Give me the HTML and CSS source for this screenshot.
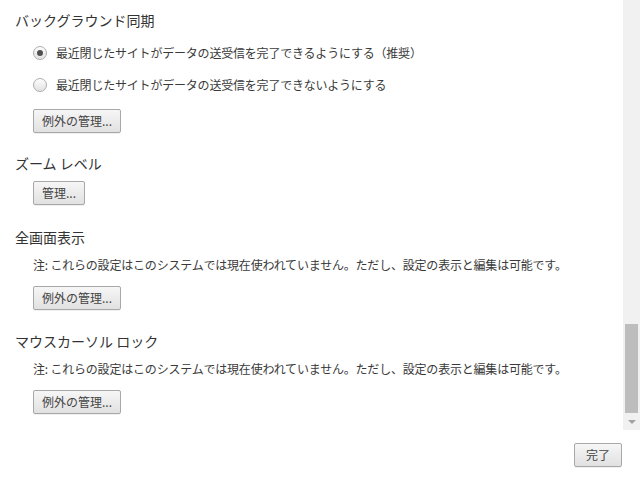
FILE: index.html
```html
<!DOCTYPE html>
<html lang="ja">
<head>
<meta charset="utf-8">
<link rel="stylesheet" href="styles.css">
</head>
<body>
<div class="main">
  <div class="content">
    <section class="section first">
      <h3 class="heading">バックグラウンド同期</h3>
      <div class="radios">
        <label class="radio-row"><span class="radio checked"></span><span>最近閉じたサイトがデータの送受信を完了できるようにする（推奨）</span></label>
        <label class="radio-row"><span class="radio"></span><span>最近閉じたサイトがデータの送受信を完了できないようにする</span></label>
      </div>
      <button class="btn btn-r">例外の管理...</button>
    </section>
    <section class="section s2">
      <h3 class="heading">ズーム レベル</h3>
      <button class="btn btn-h">管理...</button>
    </section>
    <section class="section s3">
      <h3 class="heading">全画面表示</h3>
      <p class="note">注: これらの設定はこのシステムでは現在使われていません。ただし、設定の表示と編集は可能です。</p>
      <button class="btn btn-n">例外の管理...</button>
    </section>
    <section class="section s4">
      <h3 class="heading">マウスカーソル ロック</h3>
      <p class="note">注: これらの設定はこのシステムでは現在使われていません。ただし、設定の表示と編集は可能です。</p>
      <button class="btn btn-n">例外の管理...</button>
    </section>
  </div>
  <div class="scrollbar">
    <div class="thumb"></div>
    <div class="arrow"><span class="tri"></span></div>
  </div>
</div>
<div class="footer">
  <button class="btn done">完了</button>
</div>
</body>
</html>
```
FILE: styles.css
```css
html, body {
  margin: 0;
  padding: 0;
  background: #fff;
}
body {
  width: 640px;
  height: 481px;
  overflow: hidden;
  font-family: "Noto Sans CJK JP", "Noto Sans", sans-serif;
  font-size: 12px;
  color: #333;
}
.main {
  display: flex;
  height: 430px;
}
.content {
  flex: 1;
  padding: 10px 0 0 15px;
  overflow: hidden;
}
.section {
  display: flex;
  flex-direction: column;
  align-items: flex-start;
}
.s2 { margin-top: 20px; }
.s3 { margin-top: 22px; }
.s4 { margin-top: 21px; }
.heading {
  margin: 0;
  font-size: 14px;
  font-weight: normal;
  line-height: 20px;
  color: #333;
}
.radios {
  display: flex;
  flex-direction: column;
  gap: 12px;
  margin: 13px 0 0 18px;
}
.radio-row {
  display: flex;
  align-items: center;
  gap: 9px;
  height: 20px;
  line-height: 20px;
  color: #3a3a3a;
  letter-spacing: -0.2px;
}
.radio {
  width: 14px;
  height: 14px;
  box-sizing: border-box;
  border-radius: 50%;
  border: 1px solid #adadad;
  background: linear-gradient(#fdfdfd, #e2e2e2);
  display: flex;
  align-items: center;
  justify-content: center;
}
.radio.checked::after {
  content: "";
  width: 6px;
  height: 6px;
  border-radius: 50%;
  background: #505050;
}
.note {
  margin: 8px 0 0 18px;
  line-height: 20px;
  color: #3a3a3a;
  letter-spacing: -0.2px;
}
.btn {
  font-family: "Noto Sans CJK JP", "Noto Sans", sans-serif;
  font-size: 12px;
  color: #444;
  height: 24px;
  padding: 0 8px;
  border: 1px solid #a8a8a8;
  border-radius: 2px;
  background: linear-gradient(#f6f6f6, #e1e1e1);
  box-shadow: 0 1px 0 rgba(0,0,0,0.06);
  line-height: 22px;
  margin: 0;
}
.btn-r { margin: 14px 0 0 18px; }
.btn-h { margin: 8px 0 0 18px; }
.btn-n { margin: 11px 0 0 18px; }
.scrollbar {
  width: 17px;
  background: #f1f1f1;
  display: flex;
  flex-direction: column;
  justify-content: flex-end;
  align-items: center;
}
.thumb {
  width: 13px;
  height: 89px;
  background: #bdbdbd;
}
.arrow {
  width: 17px;
  height: 17px;
  display: flex;
  align-items: center;
  justify-content: center;
}
.tri {
  width: 0;
  height: 0;
  border-left: 4px solid transparent;
  border-right: 4px solid transparent;
  border-top: 4px solid #a3a3a3;
}
.footer {
  height: 51px;
  display: flex;
  justify-content: flex-end;
  align-items: flex-start;
  padding: 13px 18px 0 0;
  box-sizing: border-box;
}
.done {
  padding: 0 11px;
}
```
